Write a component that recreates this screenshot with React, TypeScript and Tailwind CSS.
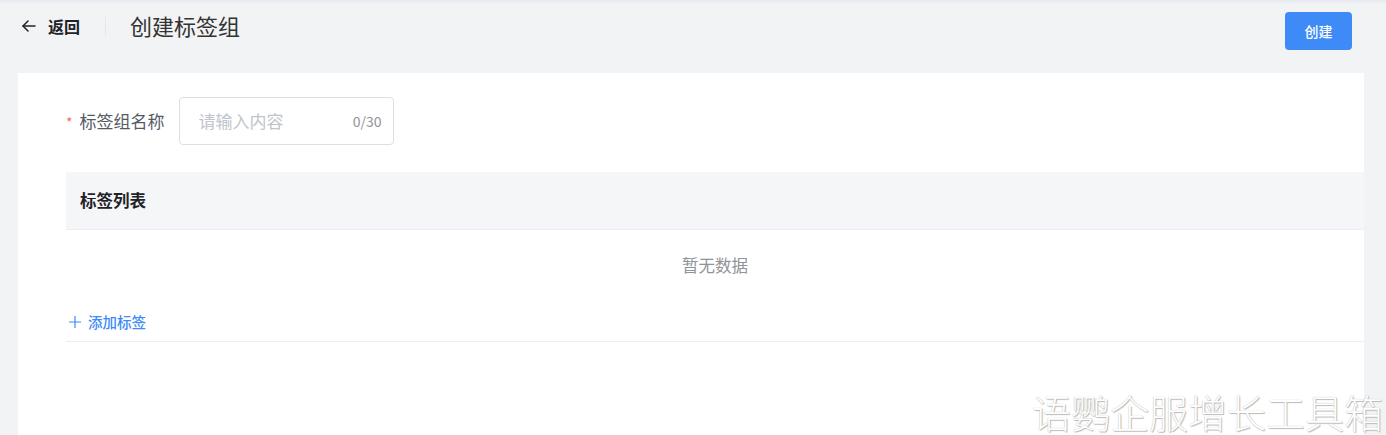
import React, { useState } from "react";

const font = { fontFamily: '"Noto Sans CJK SC", "Noto Sans", sans-serif' };

const BackArrow: React.FC = () => (
  <svg width="16" height="16" viewBox="0 0 16 16" fill="none" stroke="#1f2329" strokeWidth="1.5" strokeLinecap="round" strokeLinejoin="round">
    <path d="M14 8H2" />
    <path d="M7 3L2 8l5 5" />
  </svg>
);

const App: React.FC = () => {
  const [name, setName] = useState("");

  return (
    <div className="relative w-[1386px] h-[435px] overflow-hidden bg-[#f2f3f5]" style={font}>
      {/* top shadow */}
      <div className="h-[4px] bg-gradient-to-b from-[#e3e8f0] to-[#f2f3f5]" />

      {/* Header */}
      <div className="flex items-start justify-between h-[69px] pl-[21px] pr-[34px]">
        <div className="flex items-center h-[44px]">
          <button className="flex items-center gap-[11px] text-[16px] font-bold text-[#1f2329]">
            <BackArrow />
            <span>返回</span>
          </button>
          <div className="w-px h-[19px] bg-[#e4e6eb] ml-[25px] mr-[24px]" />
          <h1 className="text-[22px] text-[#333] mt-[-2px]">创建标签组</h1>
        </div>
        <button className="mt-[8px] w-[67px] h-[38px] rounded-[4px] bg-[#3e8bf7] text-white text-[14px] font-medium">
          创建
        </button>
      </div>

      {/* Card */}
      <div className="ml-[18px] w-[1346px] h-[362px] bg-white pt-[24px]">
        <div className="flex items-center pl-[48px]">
          <span className="text-[#f56c6c] text-[14px] mr-[7px] mt-[2px]">*</span>
          <label className="text-[17px] text-[#555b66]">标签组名称</label>
          <div className="ml-[14px] w-[215px] h-[48px] border border-[#dcdfe6] rounded-[4px] flex items-center pl-[19px] pr-[11px]">
            <input
              value={name}
              maxLength={30}
              onChange={(e) => setName(e.target.value)}
              placeholder="请输入内容"
              className="flex-1 min-w-0 outline-none text-[17px] text-[#333] placeholder:text-[#c0c4cc]"
              style={font}
            />
            <span className="text-[14px] text-[#909399]">{name.length}/30</span>
          </div>
        </div>

        {/* Table */}
        <div className="ml-[48px] mt-[27px]">
          <div className="h-[58px] bg-[#f5f6f8] border-b border-[#ebeef5] flex items-center pl-[14px]">
            <span className="text-[16.5px] font-bold text-[#1f2329]">标签列表</span>
          </div>
          <div className="h-[72px] flex items-center justify-center">
            <span className="text-[16.5px] text-[#909399] mb-[2px]">暂无数据</span>
          </div>
          <div className="h-[40px] border-b border-[#ebeef5] flex items-center pl-[2px]">
            <button className="flex items-center gap-[6px] text-[14.5px] text-[#3e8bf7] font-medium">
              <svg width="14" height="14" viewBox="0 0 14 14" stroke="#3e8bf7" strokeWidth="1.2">
                <path d="M7 1v12M1 7h12" />
              </svg>
              <span>添加标签</span>
            </button>
          </div>
        </div>
      </div>

      {/* watermark */}
      <div
        className="absolute right-[3px] bottom-[4px] text-[39px] leading-none text-white font-light pointer-events-none"
        style={{ ...font, textShadow: "0 0 1px #a8a8a8, 1px 1px 1px #bdbdbd" }}
      >
        语鹦企服增长工具箱
      </div>
    </div>
  );
};

export default App;
